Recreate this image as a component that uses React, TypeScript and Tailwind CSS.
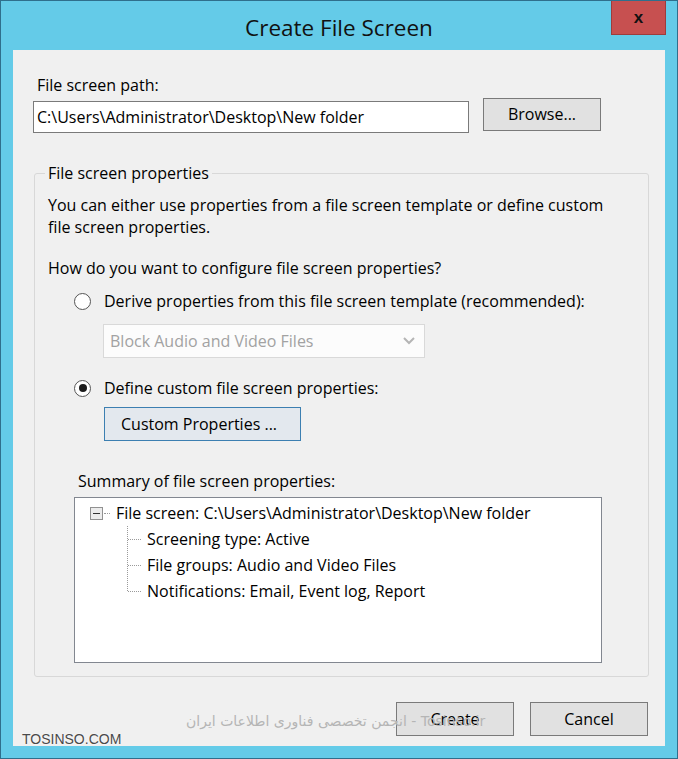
export default function App() {
  return (
    <div className="w-[678px] h-[759px] bg-[#64cbe8] border border-[#2f6f8c] relative font-['Open_Sans',sans-serif] text-[16px] text-black">
      {/* title bar */}
      <div className="h-[49px] flex items-center justify-center">
        <span className="text-[22.5px] leading-[28px] pt-[4px] text-[#111]">Create File Screen</span>
      </div>
      <div className="absolute top-0 right-[11px] w-[55px] h-[34px] bg-[#c75050] border border-[#9e3c3c] border-t-0 flex items-center justify-center">
        <span className="font-['Liberation_Sans',sans-serif] font-bold text-[17px] leading-none text-[#111] -mt-[1px]">x</span>
      </div>

      {/* client area */}
      <div className="mx-[12px] h-[696px] bg-[#f0f0f0] flex flex-col">
        <div className="mt-[24px] ml-[24px] leading-[22px]">File screen path:</div>
        <div className="mt-[2px] ml-[20px] flex items-start">
          <div className="mt-[3px] w-[436px] h-[32px] border border-[#7a7a7a] bg-white pl-[3px] leading-[30px]">
            C:\Users\Administrator\Desktop\New folder
          </div>
          <button className="ml-[14px] w-[118px] h-[33px] border border-[#7a7a7a] bg-[#e1e1e1] leading-[31px]">
            Browse...
          </button>
        </div>

        <fieldset className="mt-[29px] ml-[21px] w-[615px] border border-[#d8d8d8] rounded-[3px] pl-[10px] pr-[10px] pt-[10px] pb-[13px]">
          <legend className="px-[3px] leading-[22px]">File screen properties</legend>
          <div className="pl-[3px] flex flex-col items-start">
            <div className="leading-[22px]">
              <div>You can either use properties from a file screen template or define custom</div>
              <div>file screen properties.</div>
            </div>
            <div className="mt-[19px] leading-[22px]">How do you want to configure file screen properties?</div>

            <div className="mt-[11px] h-[22px] flex items-center pl-[26px]">
              <span className="w-[17px] h-[17px] rounded-full border border-[#555] bg-white" />
              <span className="ml-[13px] leading-[22px]">Derive properties from this file screen template (recommended):</span>
            </div>

            <div className="mt-[12px] ml-[55px] w-[322px] h-[34px] border border-[#d9d9d9] bg-[#fcfcfc] flex items-center justify-between pl-[6px] pr-[9px]">
              <span className="text-[#a2a2a2]">Block Audio and Video Files</span>
              <svg width="12" height="8" viewBox="0 0 12 8">
                <polyline points="1,1 6,6 11,1" fill="none" stroke="#b5b5b5" strokeWidth="2" />
              </svg>
            </div>

            <div className="mt-[19px] h-[22px] flex items-center pl-[26px]">
              <span className="w-[17px] h-[17px] rounded-full border border-[#555] bg-white flex items-center justify-center">
                <span className="w-[8px] h-[8px] rounded-full bg-[#1b1b1b]" />
              </span>
              <span className="ml-[13px] leading-[22px]">Define custom file screen properties:</span>
            </div>

            <button className="mt-[8px] ml-[56px] w-[197px] h-[34px] border border-[#3c7fb1] bg-[#e3e8ee] text-left pl-[16px] leading-[32px]">
              Custom Properties ...
            </button>

            <div className="mt-[29px] ml-[30px] leading-[22px]">Summary of file screen properties:</div>

            <div className="mt-[5px] ml-[26px] w-[528px] h-[166px] border border-[#828790] bg-white pt-[2px] pl-[15px]">
              <div className="h-[26px] flex items-center">
                <span className="w-[13px] h-[13px] border border-[#919191] bg-[#ececec] flex items-center justify-center">
                  <span className="w-[7px] h-[1px] bg-[#333]" />
                </span>
                <span className="w-[6px] ml-[1px] border-t border-dotted border-[#9a9a9a]" />
                <span className="ml-[6px] leading-[26px]">File screen: C:\Users\Administrator\Desktop\New folder</span>
              </div>
              <div className="flex">
                <svg width="20" height="78" viewBox="0 0 20 78" className="ml-[37px] shrink-0">
                  <line x1="0.5" y1="0" x2="0.5" y2="65" stroke="#9a9a9a" strokeDasharray="1 1" />
                  <line x1="1" y1="13.5" x2="15" y2="13.5" stroke="#9a9a9a" strokeDasharray="1 1" />
                  <line x1="1" y1="39.5" x2="15" y2="39.5" stroke="#9a9a9a" strokeDasharray="1 1" />
                  <line x1="1" y1="65.5" x2="15" y2="65.5" stroke="#9a9a9a" strokeDasharray="1 1" />
                </svg>
                <div className="flex flex-col">
                  <div className="h-[26px] leading-[26px]">Screening type: Active</div>
                  <div className="h-[26px] leading-[26px]">File groups: Audio and Video Files</div>
                  <div className="h-[26px] leading-[26px]">Notifications: Email, Event log, Report</div>
                </div>
              </div>
            </div>
          </div>
        </fieldset>

        <div className="mt-[25px] pr-[17px] flex justify-end gap-[16px]">
          <button className="w-[118px] h-[34px] border border-[#7a7a7a] bg-[#e1e1e1] leading-[32px]">Create</button>
          <button className="w-[118px] h-[34px] border border-[#7a7a7a] bg-[#e1e1e1] leading-[32px]">Cancel</button>
        </div>
      </div>

      {/* watermarks */}
      <div dir="ltr" className="absolute left-[185px] top-[709px] text-[14px] leading-[22px] text-[#b5b5b5] font-['DejaVu_Sans',sans-serif] whitespace-nowrap">
        انجمن تخصصی فناوری اطلاعات ایران - Tosinso.ir
      </div>
      <div className="absolute left-[21px] top-[730px] text-[14px] leading-[16px] text-[#4a4a4a] font-['Liberation_Sans',sans-serif] [text-shadow:0_0_2px_#fff]">
        TOSINSO.COM
      </div>
    </div>
  );
}
